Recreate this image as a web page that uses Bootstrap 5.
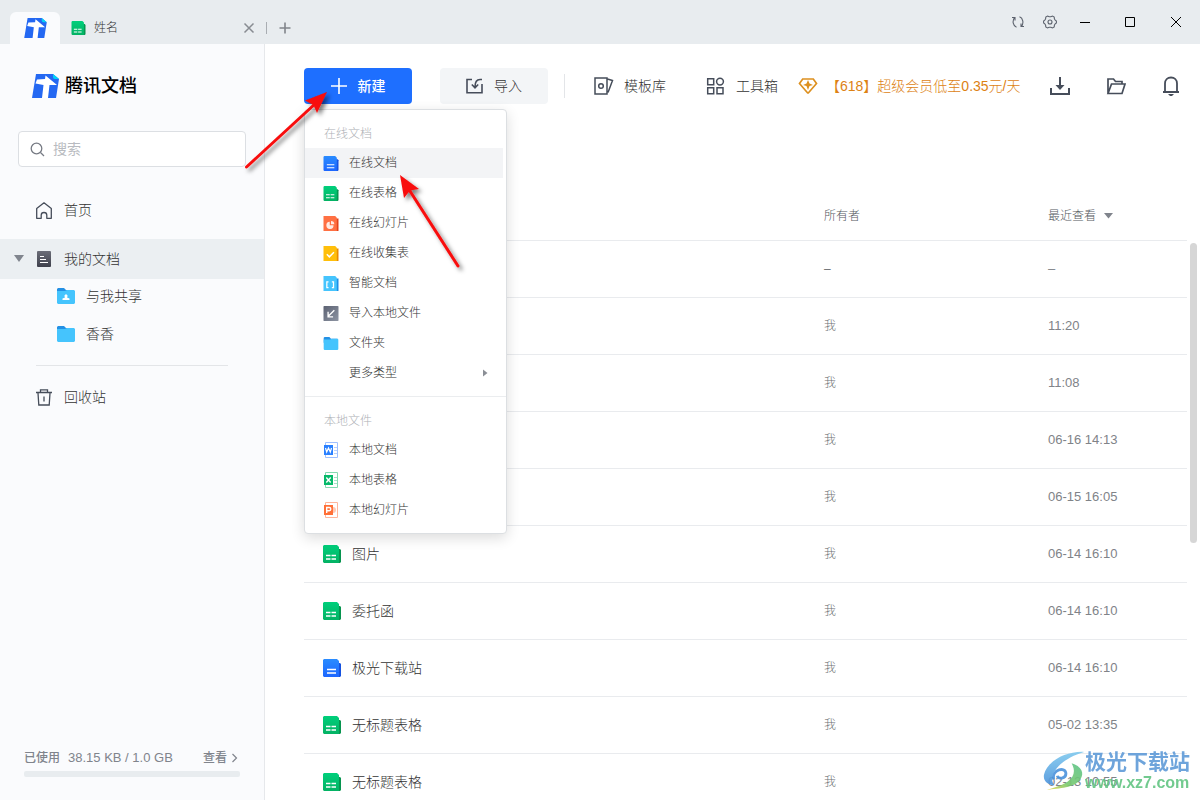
<!DOCTYPE html>
<html lang="zh-CN">
<head>
<meta charset="utf-8">
<meta name="viewport" content="width=device-width, initial-scale=1">
<title>腾讯文档</title>
<link href="https://cdn.jsdelivr.net/npm/bootstrap@5.3.0/dist/css/bootstrap.min.css" rel="stylesheet">
<style>
:root{--ink:#464d5a;--line:#e9ebee;--brand:#1e6fff}
body{font-family:"Liberation Sans","Noto Sans CJK SC",sans-serif;font-size:14px;font-weight:300;line-height:20px;color:#333;background:#fff}
a{color:inherit;text-decoration:none}
svg{display:block;flex:none}
button{font:inherit;color:inherit}
.bare{border:0;background:none;padding:0}
.titlebar{height:44px;background:#e8ecef}
.home-tab{width:50px;height:32px;background:#fafbfd;border-radius:6px 6px 0 0;margin-left:10px}
.doc-tab{width:206px;height:32px;padding:0 11px;font-size:12px;color:#333}
.tab-rule{width:1px;height:12px;background:#a9adb2}
.win-tools{padding-right:18px;gap:17px}
.win-btns{margin-left:6px;gap:34px}
.side{width:265px;background:#fafbfd;border-right:1px solid #e6e8eb}
.brand-row{height:36px;margin-top:24px;padding-left:32px;gap:6px;font-size:18px;color:#000;font-weight:500}
.find{height:36px;margin:27px 18px 23px;background:#fff;border:1px solid #dcdfe3;border-radius:4px;padding:0 11px}
.find input{border:0;outline:0;padding:0;background:none;font-size:14px;min-width:0}
.find input::placeholder{color:#b8bbc0;opacity:1}
.nav-row{height:40px;padding-left:36px;gap:12px}
.nav-row.on{background:#ebeff2;margin-top:9px;padding-left:14px}
.sub-row{height:34px;padding-left:57px;gap:11px}
.side-rule{height:1px;background:#e3e5e8;margin:14px 36px 11px}
.quota{padding:0 24px 23px;font-size:12px;color:#80848c;font-weight:500}
.used{font-size:13px}
.quota-bar{height:6px;border-radius:2px;background:#e8ecef;margin-top:3px}
.tools{margin-top:24px;padding:0 20px 0 39px;height:36px}
.big-btn{width:108px;height:36px;border-radius:4px;gap:11px}
.new-btn{background:var(--brand);color:#fff;font-weight:500}
.import-btn{background:#f3f5f7;color:#333;margin-left:28px}
.tool-rule{width:1px;height:24px;background:#e3e5e8}
.tool-link{gap:10px}
.vip{color:#dd8214;margin-left:20px}
.menu-pop{left:0;top:41px;width:203px;background:#fff;border:1px solid #dcdfe2;border-radius:4px;box-shadow:0 4px 14px rgba(0,0,0,.14);padding-bottom:8px;z-index:5;font-size:12px;color:#333}
.menu-head{padding:14px 19px 4px;color:#aeb1b6}
.menu-row{height:30px;width:198px;padding:0 15px 0 18px;gap:10px;text-align:left}
.menu-row.on{background:#f3f4f6}
.menu-rule{height:1px;background:#ebedef;margin-top:8px}
.listing{margin-top:88px;padding-left:39px}
.files{table-layout:fixed;width:100%;border-collapse:separate;border-spacing:0}
.files th{height:49px;font-size:12px;font-weight:300;color:#555960}
.files td{height:57px;font-size:12px;color:#6c6f74}
.files th,.files td{padding:0;border-bottom:1px solid var(--line);vertical-align:middle}
.files .when{font-size:13px;color:#808388}
.files .fname{font-size:14px;color:#333;padding-left:18px}
.fname a{gap:10px}
.c-own{width:224px}.c-date{width:139px}
.thumb{width:7px;height:300px;margin:51px 3px 0;border-radius:4px;background:#d6d6d6}
.marks{left:0;top:0;z-index:8;pointer-events:none}
.water{right:10px;bottom:8px;z-index:7;pointer-events:none;opacity:.9}
.water-cn{font-size:21px;line-height:24px;font-weight:700;color:#5f9bd8}
.water-en{font-size:16px;line-height:18px;font-weight:700;color:#63c583}
</style>
</head>
<body>
<svg width="0" height="0" class="position-absolute" aria-hidden="true">
<defs>
<linearGradient id="gBlue" x2="0" y2="1"><stop stop-color="#2a8cff"/><stop offset="1" stop-color="#1c66ff"/></linearGradient>
<linearGradient id="gGreen" x2="0" y2="1"><stop stop-color="#00cf7b"/><stop offset="1" stop-color="#04b264"/></linearGradient>
<linearGradient id="gGrey" x2="1" y2="1"><stop stop-color="#5b6172"/><stop offset="1" stop-color="#8e95a3"/></linearGradient>
<linearGradient id="gDark" x2="0" y2="1"><stop stop-color="#6b6d78"/><stop offset="1" stop-color="#3e404c"/></linearGradient>
<linearGradient id="gSwirl" x2="0" y2="1"><stop stop-color="#7fc9ee"/><stop offset="1" stop-color="#4b93dc"/></linearGradient>
<linearGradient id="gLeaf" x1="1" x2="0" y2="1"><stop stop-color="#5cc48a"/><stop offset=".6" stop-color="#79c96e"/><stop offset="1" stop-color="#f0d94a"/></linearGradient>
</defs>
<symbol id="logo" viewBox="0 0 27 24"><path fill="#2468f2" d="M4 0h17l6 5-3 19H0z"/><path fill="#00d2f5" d="M21 0l6 5h-4a2 2 0 0 1-2-2z"/><path fill="#fff" d="M5 5.500l8-.5.5-3.500L25 11h-7.500L16 24h-6l1.500-13L3.500 9.500z"/></symbol>
<symbol id="doc" viewBox="0 0 18 18"><path fill="#1552e0" d="M14 4h3l1 1v12l-1 1h-3z"/><path fill="url(#gBlue)" d="M1 0h13l2 2v16H1l-1-1V1z"/><path stroke="#fff" stroke-width="1.300" d="M4 10.500h9M4 14h9"/></symbol>
<symbol id="sheet" viewBox="0 0 18 18"><path fill="#07944f" d="M14 4h3l1 1v12l-1 1h-3z"/><path fill="url(#gGreen)" d="M1 0h13l2 2v16H1l-1-1V1z"/><path stroke="#fff" stroke-width="1.300" d="M3 10.500h4.500M8.500 10.500H13M3 14h4.500M8.500 14H13"/></symbol>
<symbol id="slide" viewBox="0 0 18 18"><path fill="#e2421b" d="M14 3h4v15h-4z"/><path fill="#ff7043" d="M0 0h14l2 2v16H0z"/><path fill="#fff" opacity=".85" d="M7.500 7v4h4.500a4.300 4.300 0 1 1-4.500-4zM9 6a4 4 0 0 1 4 3.800H9z"/></symbol>
<symbol id="form" viewBox="0 0 18 18"><path fill="#e88a00" d="M14 3h4v15h-4z"/><path fill="#ffbf0a" d="M0 0h14l2 2v16H0z"/><path fill="none" stroke="#fff" stroke-width="1.800" d="M4 10l3 3 5.500-5.500"/></symbol>
<symbol id="smart" viewBox="0 0 18 18"><path fill="#1a8fe8" d="M14 3h4v15h-4z"/><path fill="#45c4fd" d="M0 0h14l2 2v16H0z"/><path fill="none" stroke="#fff" stroke-width="1.500" d="M6 7H4v7h2M10 7h2v7h-2"/></symbol>
<symbol id="import-doc" viewBox="0 0 18 18"><rect width="18" height="18" rx="1" fill="url(#gGrey)"/><path fill="none" stroke="#fff" stroke-width="1.600" d="M13 5l-7 7M5.500 7v6h6"/></symbol>
<symbol id="folder" viewBox="0 0 18 16"><path fill="#2490e4" d="M0 1l1-1h6l2 2h8v5H0z"/><path fill="#45c4fd" d="M0 3h8l2-1h7l1 1v12l-1 1H1l-1-1z"/></symbol>
<symbol id="trash" viewBox="0 0 16 17"><path fill="none" stroke="#464d5a" stroke-width="1.300" d="M0 3.500h16M4.500 3V.8h7V3M2 4l.8 12h10.400L14 4M8 7.500v5"/></symbol>
</svg>

<div class="vh-100 d-flex flex-column overflow-hidden position-relative">
  <header class="titlebar d-flex align-items-end flex-shrink-0">
    <a href="#" class="home-tab d-flex align-items-center justify-content-center" aria-label="主页"><svg width="23" height="20"><use href="#logo"/></svg></a>
    <div class="doc-tab d-flex align-items-center">
      <svg width="15" height="14" class="me-2"><use href="#sheet"/></svg><span>姓名</span>
      <button class="bare ms-auto" aria-label="关闭标签"><svg width="12" height="12" viewBox="0 0 12 12"><path stroke="#888c92" stroke-width="1.500" d="M1.500 1.500l9 9M10.500 1.500l-9 9"/></svg></button>
    </div>
    <div class="h-75 d-flex align-items-center">
      <i class="tab-rule"></i>
      <button class="bare ms-2 ps-1" aria-label="新建标签"><svg width="12" height="12" viewBox="0 0 12 12"><path stroke="#80848a" stroke-width="1.600" d="M6 .5v11M.5 6h11"/></svg></button>
    </div>
    <div class="win-tools ms-auto d-flex align-items-center h-100">
      <button class="bare" aria-label="同步"><svg width="16" height="14" viewBox="0 0 16 14"><path fill="none" stroke="#5c626d" stroke-width="1.100" d="M6.500 12.200C3 11 2 6 4.500 2.500M2 2.500h3v3M9.500 1.800c3.500 1.200 4.500 6.200 2 9.700M14 11.500h-3v-3"/></svg></button>
      <button class="bare" aria-label="设置"><svg width="14" height="14" viewBox="0 0 14 14"><path fill="none" stroke="#5c626d" stroke-width="1.100" d="M4.500 1l1.700.8h1.600L9.500 1l1.700 1 .2 1.900.8 1.300 1.200.8v2l-1.200.8-.8 1.300-.2 1.900-1.700 1-1.700-.8H6.200l-1.700.8-1.700-1-.2-1.900-.8-1.300L.6 8V6l1.200-.8.8-1.300L2.800 2z"/><circle cx="7" cy="7" r="2" fill="none" stroke="#5c626d" stroke-width="1.100"/></svg></button>
      <div class="win-btns d-flex align-items-center">
        <button class="bare" aria-label="最小化"><svg width="10" height="12" viewBox="0 0 10 12"><path stroke="#000" d="M0 6.500h10"/></svg></button>
        <button class="bare" aria-label="最大化"><svg width="12" height="12" viewBox="0 0 12 12"><path fill="none" stroke="#000" d="M1.500 1.500h9v9h-9z"/></svg></button>
        <button class="bare" aria-label="关闭"><svg width="12" height="12" viewBox="0 0 12 12"><path stroke="#000" d="M1 1l10 10M11 1L1 11"/></svg></button>
      </div>
    </div>
  </header>

  <div class="d-flex flex-grow-1 overflow-hidden">
    <aside class="side d-flex flex-column flex-shrink-0">
      <div class="brand-row d-flex align-items-center"><svg width="27" height="24"><use href="#logo"/></svg>腾讯文档</div>
      <div class="find d-flex align-items-center gap-2">
        <svg width="15" height="15" viewBox="0 0 15 15"><circle cx="6.500" cy="6.500" r="5.300" fill="none" stroke="#777b84" stroke-width="1.300"/><path stroke="#777b84" stroke-width="1.300" d="M10.500 10.500l3.500 3.500"/></svg>
        <input type="text" class="flex-grow-1" placeholder="搜索" aria-label="搜索">
      </div>
      <nav>
        <a href="#" class="nav-row d-flex align-items-center"><svg width="16" height="17" viewBox="0 0 16 17"><path fill="none" stroke="#464d5a" stroke-width="1.300" stroke-linejoin="round" d="M.7 16.300V6.500L8 .8l7.300 5.700v9.800h-4.500v-3a2.800 2.800 0 0 0-5.600 0v3z"/></svg>首页</a>
        <a href="#" class="nav-row on d-flex align-items-center"><svg width="10" height="8" viewBox="0 0 10 8"><path fill="#80858e" d="M0 0h10L5 7z"/></svg><svg width="16" height="16" viewBox="0 0 16 16"><rect x="1" width="14" height="16" rx="1" fill="url(#gDark)"/><path stroke="#fff" stroke-width="1.100" d="M4 5.500h4M4 8.500h6M4 11.500h8"/></svg>我的文档</a>
        <a href="#" class="sub-row d-flex align-items-center"><svg width="18" height="16" viewBox="0 0 18 16"><use href="#folder"/><path fill="#fff" d="M9 6l1.700 1.700L10 9.500l2.500 1V12h-7v-1.500l2.500-1-.7-1.800z"/></svg>与我共享</a>
        <a href="#" class="sub-row mt-1 d-flex align-items-center"><svg width="18" height="16"><use href="#folder"/></svg>香香</a>
        <div class="side-rule"></div>
        <a href="#" class="nav-row d-flex align-items-center"><svg width="16" height="17"><use href="#trash"/></svg>回收站</a>
      </nav>
      <div class="quota mt-auto">
        <div class="d-flex align-items-center"><span class="me-2">已使用</span><span class="used">38.15 KB / 1.0 GB</span><a href="#" class="ms-auto d-flex align-items-center gap-1">查看<svg width="9" height="10" viewBox="0 0 9 10"><path fill="none" stroke="#80848c" stroke-width="1.200" d="M1.500 1l4 4-4 4"/></svg></a></div>
        <div class="quota-bar"></div>
      </div>
    </aside>

    <main class="flex-grow-1 d-flex flex-column overflow-hidden">
      <div class="tools d-flex align-items-center flex-shrink-0">
        <div class="position-relative">
          <button class="bare big-btn new-btn d-flex align-items-center justify-content-center"><svg width="16" height="16" viewBox="0 0 16 16"><path stroke="#fff" stroke-width="1.600" d="M8 0v16M0 8h16"/></svg>新建</button>
          <div class="menu-pop position-absolute">
            <div class="menu-head">在线文档</div>
            <button class="bare menu-row on d-flex align-items-center"><svg width="16" height="15"><use href="#doc"/></svg>在线文档</button>
            <button class="bare menu-row d-flex align-items-center"><svg width="16" height="15"><use href="#sheet"/></svg>在线表格</button>
            <button class="bare menu-row d-flex align-items-center"><svg width="16" height="15"><use href="#slide"/></svg>在线幻灯片</button>
            <button class="bare menu-row d-flex align-items-center"><svg width="16" height="15"><use href="#form"/></svg>在线收集表</button>
            <button class="bare menu-row d-flex align-items-center"><svg width="16" height="15"><use href="#smart"/></svg>智能文档</button>
            <button class="bare menu-row d-flex align-items-center"><svg width="16" height="15"><use href="#import-doc"/></svg>导入本地文件</button>
            <button class="bare menu-row d-flex align-items-center"><svg width="16" height="13"><use href="#folder"/></svg>文件夹</button>
            <button class="bare menu-row d-flex align-items-center"><svg width="16" height="15"></svg>更多类型<svg class="ms-auto" width="5" height="8" viewBox="0 0 5 8"><path fill="#8b8f96" d="M0 0.500l4.500 3.500L0 7.500z"/></svg></button>
            <div class="menu-rule"></div>
            <div class="menu-head">本地文件</div>
            <button class="bare menu-row d-flex align-items-center"><svg width="16" height="16" viewBox="0 0 16 16"><path fill="#fff" stroke="#9fc0ff" d="M2.500.5h12v15h-12z"/><path stroke="#bcd2fb" d="M11 5.500h3M11 8.500h3M11 11.500h3"/><path fill="#2a80ff" d="M1 3h9v10H1z"/><path fill="none" stroke="#fff" stroke-width="1.200" d="M2.500 6l1.200 4 1.800-4 1.800 4L8.500 6"/></svg>本地文档</button>
            <button class="bare menu-row d-flex align-items-center"><svg width="16" height="16" viewBox="0 0 16 16"><path fill="#fff" stroke="#86d9b1" d="M2.500.5h12v15h-12z"/><path stroke="#a9e3c8" d="M11 5.500h3M11 8.500h3M11 11.500h3"/><path fill="#06b96a" d="M1 3h9v10H1z"/><path fill="none" stroke="#fff" stroke-width="1.400" d="M3.300 5.500l4.400 5M7.700 5.500l-4.400 5"/></svg>本地表格</button>
            <button class="bare menu-row d-flex align-items-center"><svg width="16" height="16" viewBox="0 0 16 16"><path fill="#fff" stroke="#ffb69c" d="M2.500.5h12v15h-12z"/><path fill="#ffc9b5" d="M10 5a3 3 0 0 1 0 6z"/><path fill="#ff7038" d="M1 3h9v10H1z"/><path fill="none" stroke="#fff" stroke-width="1.400" d="M3.700 11V5.500h2.500a1.500 1.500 0 0 1 0 3.200H3.700"/></svg>本地幻灯片</button>
          </div>
        </div>
        <button class="bare big-btn import-btn d-flex align-items-center justify-content-center"><svg width="17" height="16" viewBox="0 0 17 16"><path fill="none" stroke="#464d5a" stroke-width="1.600" d="M6 1.500H1v13.300h15V6M16 1.500h-2c-3.500 0-5 2-5 7.500M5.800 6.500L9 9.800l3.200-3.300"/></svg>导入</button>
        <i class="tool-rule ms-3"></i>
        <a href="#" class="tool-link ms-4 ps-1 d-flex align-items-center"><svg width="21" height="18" viewBox="0 0 21 18"><path fill="none" stroke="#464d5a" stroke-width="1.500" d="M2 1h12v16H2zM14.500 2l5 1.500-4.500 12"/><circle cx="8" cy="9" r="2.300" fill="none" stroke="#464d5a" stroke-width="1.500"/></svg>模板库</a>
        <a href="#" class="tool-link ms-4 ps-3 d-flex align-items-center"><svg width="20" height="18" viewBox="0 0 20 18"><g fill="none" stroke="#464d5a" stroke-width="1.500"><path d="M1.700 1.700h6v6h-6zM1.700 10.700h6v6h-6zM11 10.700h6v6h-6z"/><circle cx="14" cy="4.600" r="3.400"/></g></svg>工具箱</a>
        <a href="#" class="vip d-flex align-items-center text-nowrap"><svg width="28" height="18" viewBox="0 0 28 18"><path fill="none" stroke="#dd901f" stroke-width="1.700" d="M9.700 16L1.500 6.500 4.700 2h10.600l3.200 4.500L10.300 16z"/><path fill="#dd901f" d="M10 3l1.500 3.500L15 8l-3.500 1L10 13 8.500 9 5 8l3.500-1.500z"/></svg>【618】超级会员低至0.35元/天</a>
        <div class="ms-auto d-flex align-items-center">
          <button class="bare me-3" aria-label="下载"><svg width="20" height="18" viewBox="0 0 20 18"><path fill="none" stroke="#464d5a" stroke-width="2" d="M1 11v6h18v-6M10 0v11"/><path fill="#464d5a" d="M5.500 8h9L10 13z"/></svg></button>
          <button class="bare mx-3 px-1" aria-label="文件夹"><svg width="20" height="17" viewBox="0 0 20 17"><path fill="none" stroke="#464d5a" stroke-width="1.700" d="M2 15.500V1h5.500l2 2.500H16V6M2 15.500L5.500 6H19l-3 9.500z"/></svg></button>
          <button class="bare ms-3" aria-label="通知"><svg width="18" height="20" viewBox="0 0 18 20"><path fill="none" stroke="#464d5a" stroke-width="1.800" d="M1 16h16M3 16V7.500C3 4 5.500 1.500 9 1.500s6 2.500 6 6V16"/><path fill="#464d5a" d="M6 18h6l-2 2H8z"/></svg></button>
        </div>
      </div>

      <div class="listing d-flex align-items-start flex-grow-1 overflow-hidden">
        <table class="files flex-grow-1">
          <colgroup><col><col class="c-own"><col class="c-date"></colgroup>
          <thead><tr><th></th><th>所有者</th><th><span class="d-flex align-items-center gap-2">最近查看<svg width="9" height="6" viewBox="0 0 9 6"><path fill="#80848c" d="M0 0h9L4.500 5.500z"/></svg></span></th></tr></thead>
          <tbody>
            <tr><td></td><td>–</td><td class="when">–</td></tr>
            <tr><td></td><td>我</td><td class="when">11:20</td></tr>
            <tr><td></td><td>我</td><td class="when">11:08</td></tr>
            <tr><td></td><td>我</td><td class="when">06-16 14:13</td></tr>
            <tr><td></td><td>我</td><td class="when">06-15 16:05</td></tr>
            <tr><td class="fname"><a href="#" class="d-flex align-items-center"><svg width="20" height="18"><use href="#sheet"/></svg>图片</a></td><td>我</td><td class="when">06-14 16:10</td></tr>
            <tr><td class="fname"><a href="#" class="d-flex align-items-center"><svg width="20" height="18"><use href="#sheet"/></svg>委托函</a></td><td>我</td><td class="when">06-14 16:10</td></tr>
            <tr><td class="fname"><a href="#" class="d-flex align-items-center"><svg width="20" height="18"><use href="#doc"/></svg>极光下载站</a></td><td>我</td><td class="when">06-14 16:10</td></tr>
            <tr><td class="fname"><a href="#" class="d-flex align-items-center"><svg width="20" height="18"><use href="#sheet"/></svg>无标题表格</a></td><td>我</td><td class="when">05-02 13:35</td></tr>
            <tr><td class="fname"><a href="#" class="d-flex align-items-center"><svg width="20" height="18"><use href="#sheet"/></svg>无标题表格</a></td><td>我</td><td class="when">02-13 10:55</td></tr>
          </tbody>
        </table>
        <div class="thumb flex-shrink-0"></div>
      </div>
    </main>
  </div>

  <div class="water position-absolute d-flex align-items-center">
    <svg width="42" height="42" viewBox="0 0 44 42"><path fill="url(#gSwirl)" d="M43 1C24 0 4 11 1 25c-1 7 4 10 11 11C4 27 16 9 43 1z"/><path fill="none" stroke="#4b93dc" stroke-width="3" d="M11 30c-2-11 13-14 13-6 0 5-8 6-9 2"/><path fill="url(#gLeaf)" d="M30 13c10 3 14 10 9 17-6 9-22 9-35 11 13-4 26-8 28-17 1-4 0-7-2-11z"/></svg>
    <div><div class="water-cn">极光下载站</div><div class="water-en">www.xz7.com</div></div>
  </div>

  <svg class="marks position-absolute" width="480" height="290" viewBox="0 0 480 290" aria-hidden="true">
    <defs><filter id="sh" x="-20%" y="-20%" width="150%" height="150%"><feDropShadow dx="3" dy="3" stdDeviation="2" flood-color="#000" flood-opacity=".5"/></filter></defs>
    <g fill="#f80c0c" stroke="#f80c0c" filter="url(#sh)">
      <path stroke-width="3" stroke-linecap="round" d="M246.500 167L316 103"/><path stroke="none" d="M327 92L305 100.500 313.500 105 317 113z"/>
      <path stroke-width="3" stroke-linecap="round" d="M458 266L408 188"/><path stroke="none" d="M400 175L404 198 410 190.500 419 189z"/>
    </g>
  </svg>
</div>
<script src="https://cdn.jsdelivr.net/npm/bootstrap@5.3.0/dist/js/bootstrap.bundle.min.js"></script>
</body>
</html>
